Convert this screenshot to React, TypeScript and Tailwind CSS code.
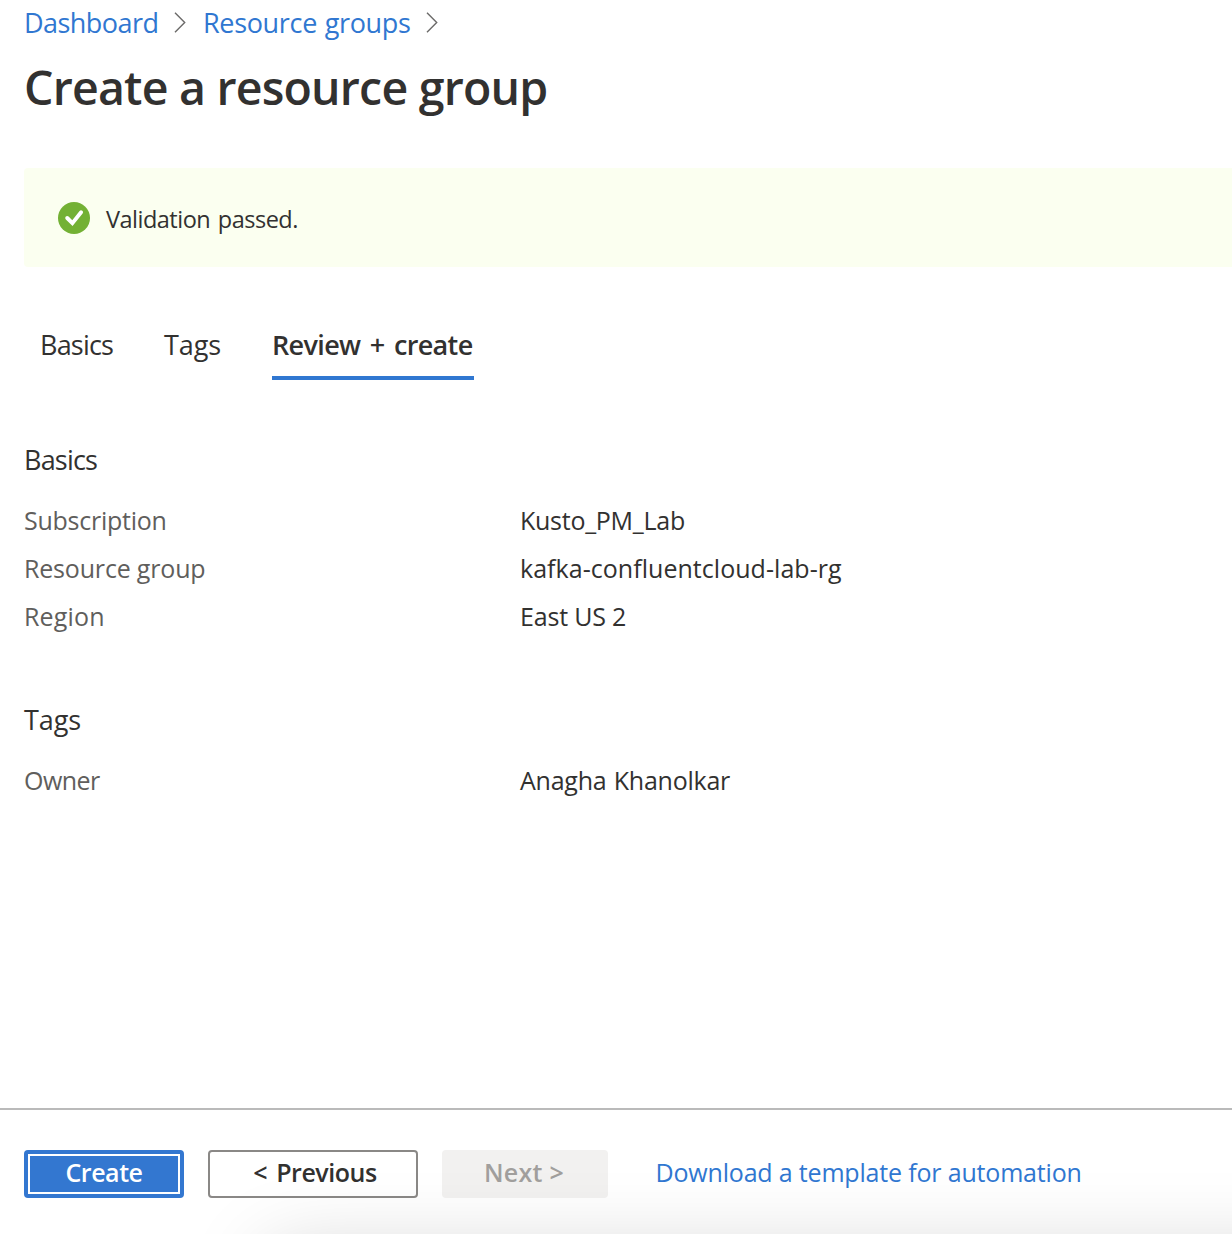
const Chevron = () => (
  <svg width="12" height="21" viewBox="0 0 12 21" fill="none" stroke="#6b6a69" strokeWidth="1.4">
    <path d="M1 0.8 10.7 10.5 1 20.2" />
  </svg>
);

const CheckBadge = () => (
  <svg width="32" height="32" viewBox="0 0 32 32" fill="none">
    <circle cx="16" cy="16" r="16" fill="#73b134" />
    <path d="M9.2 16 14.4 21.2 23.1 10.3" stroke="#fff" strokeWidth="3.9" strokeLinejoin="miter" strokeLinecap="round" />
  </svg>
);

type Item = { label: string; value: string; labelClass: string; valueClass: string };

const basics: Item[] = [
  { label: "Subscription", value: "Kusto_PM_Lab", labelClass: "tracking-[-0.25px]", valueClass: "tracking-[-0.27px]" },
  { label: "Resource group", value: "kafka-confluentcloud-lab-rg", labelClass: "tracking-[-0.18px]", valueClass: "tracking-[0.04px]" },
  { label: "Region", value: "East US 2", labelClass: "tracking-[0.15px]", valueClass: "tracking-[-0.19px]" },
];

const tags: Item[] = [
  { label: "Owner", value: "Anagha Khanolkar", labelClass: "tracking-[-0.55px]", valueClass: "tracking-[-0.23px] [word-spacing:1px]" },
];

const Section = ({ title, titleClass, items }: { title: string; titleClass: string; items: Item[] }) => (
  <section>
    <h2 className={`mb-[17px] text-[27px] leading-[39px] ${titleClass}`}>{title}</h2>
    <dl>
      {items.map((item) => (
        <div key={item.label} className="flex h-12 items-center text-[25px] leading-[48px]">
          <dt className={`w-[496px] text-[#605e5c] ${item.labelClass}`}>{item.label}</dt>
          <dd className={item.valueClass}>{item.value}</dd>
        </div>
      ))}
    </dl>
  </section>
);

export default function App() {
  return (
    <div className="relative flex h-[1234px] w-[1232px] flex-col overflow-hidden whitespace-nowrap bg-white font-['Open_Sans','Noto_Sans',sans-serif] text-[#323130]">
      <nav className="flex h-11 items-center pl-6 text-[27px] leading-[44px] text-[#3077d1]">
        <a className="w-[150px] pt-px tracking-[-0.55px]">Dashboard</a>
        <Chevron />
        <a className="ml-[17px] w-[223px] pt-px tracking-[-0.33px] [word-spacing:1px]">Resource groups</a>
        <Chevron />
      </nav>

      <h1 className="h-[84px] pl-6 pt-px text-[46.5px] font-semibold leading-[84px] tracking-[-0.8px]">Create a resource group</h1>

      <div className="ml-6 mt-10 flex h-[99px] items-center rounded-l bg-[#fbfff0] pl-[34px]">
        <CheckBadge />
        <span className="ml-4 pt-[3px] text-[23.5px] leading-8 tracking-[-0.5px] [word-spacing:2px]">Validation passed.</span>
      </div>

      <div className="ml-10 mt-[46px] flex text-[27px] leading-[63px]">
        <span className="w-[124px] tracking-[-0.8px]">Basics</span>
        <span className="w-[108px] tracking-[-0.1px]">Tags</span>
        <span className="w-[202px] border-b-4 border-[#3077d1] font-semibold tracking-[-0.65px] [word-spacing:3px]">Review + create</span>
      </div>

      <main className="mt-[60px] flex flex-1 flex-col gap-[60px] pl-6">
        <Section title="Basics" titleClass="tracking-[-0.8px]" items={basics} />
        <Section title="Tags" titleClass="tracking-[-0.1px]" items={tags} />
      </main>

      <div className="pointer-events-none absolute left-[265px] top-[1250px] h-[300px] w-[1400px] rounded-[20px] shadow-[0_0_80px_rgba(0,0,0,0.17)]" />

      <footer className="flex h-[126px] items-start border-t-2 border-[#bababa] pl-6 pt-10 text-[25px] leading-[44px]">
        <button className="h-12 w-40 rounded bg-[#3377d0] p-1 font-semibold text-white">
          <span className="block h-10 border-2 border-white leading-[33px] tracking-[-0.45px]">Create</span>
        </button>
        <button className="ml-6 h-12 w-[210px] rounded border-2 border-[#8a8886] bg-white/60 pb-[3px] pl-1 font-semibold leading-[41px] tracking-[-0.45px] [word-spacing:3px]">
          &lt; Previous
        </button>
        <button className="ml-6 h-12 w-[166px] rounded bg-[#f2f1f0] pb-[4px] pr-0.5 font-semibold leading-[43px] tracking-[0.3px] text-[#a19f9d]">
          Next &gt;
        </button>
        <a className="ml-[47.5px] leading-[45px] tracking-[-0.18px] text-[#3077d1]">Download a template for automation</a>
      </footer>
    </div>
  );
}
